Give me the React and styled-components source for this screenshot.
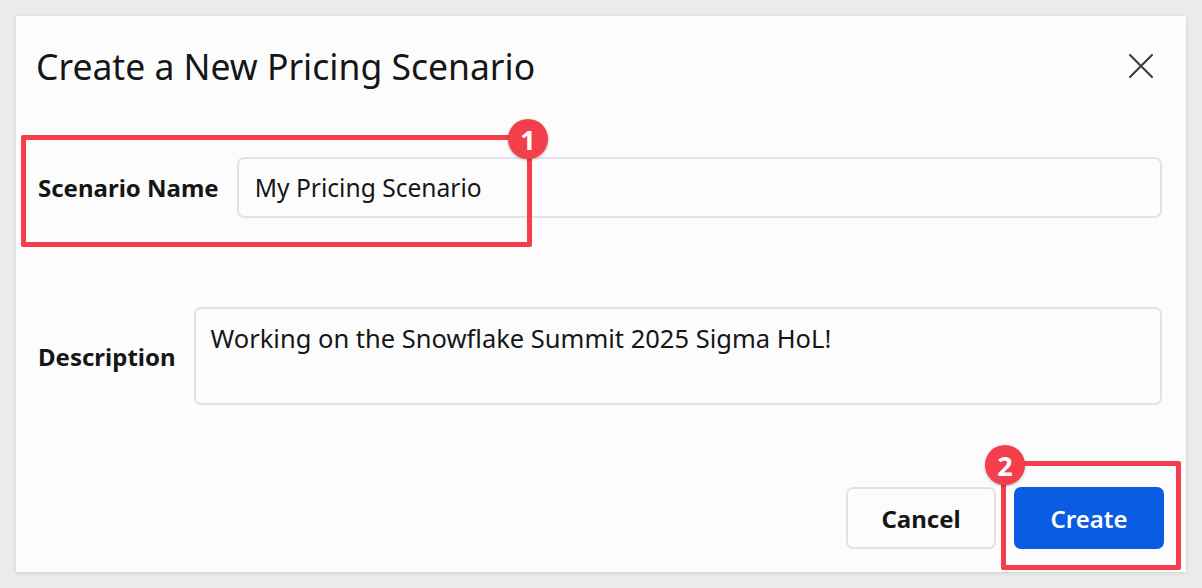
import styled, { createGlobalStyle } from "styled-components";

const GlobalStyle = createGlobalStyle`
  body {
    margin: 0;
    background: #ebebeb;
    font-family: "Noto Sans", "Open Sans", sans-serif;
    color: #161616;
  }
`;

const Page = styled.div`
  padding: 16px;
  width: 1202px;
  height: 588px;
  box-sizing: border-box;
`;

const Dialog = styled.div`
  position: relative;
  width: 1170px;
  height: 556px;
  background: #fcfcfc;
  box-shadow: 0 1px 4px rgba(0, 0, 0, 0.12);
  display: flex;
  flex-direction: column;
`;

const Header = styled.div`
  height: 100px;
  padding: 0 33px 0 20px;
  display: flex;
  align-items: center;
  justify-content: space-between;
`;

const Title = styled.h2`
  margin: 0;
  font-size: 35.5px;
  font-weight: 400;
  color: #161616;
`;

const CloseButton = styled.button`
  border: 0;
  background: none;
  padding: 0;
  width: 24px;
  height: 24px;
  display: flex;
  cursor: pointer;
`;

const Form = styled.div`
  padding: 41px 24px 0 22px;
  display: flex;
  flex-direction: column;
  gap: 89px;
`;

const Row = styled.div`
  display: flex;
  align-items: center;
  gap: ${(p) => p.$gap}px;
`;

const Label = styled.label`
  font-size: 24px;
  font-weight: 700;
  white-space: nowrap;
`;

const TextInput = styled.input`
  flex: 1;
  height: 61px;
  box-sizing: border-box;
  border: 2px solid #e3e3e3;
  border-radius: 7px;
  background: #fcfcfc;
  padding: 0 16px;
  font-family: "Noto Sans", sans-serif;
  font-size: 24.6px;
  color: #161616;
  outline: none;
`;

const TextArea = styled.textarea`
  flex: 1;
  height: 98px;
  box-sizing: border-box;
  border: 2px solid #e3e3e3;
  border-radius: 7px;
  background: #fcfcfc;
  padding: 12px 15px;
  font-family: "Noto Sans", sans-serif;
  font-size: 25.5px;
  line-height: 34px;
  color: #161616;
  resize: none;
  outline: none;
`;

const Footer = styled.div`
  margin-top: 82px;
  padding: 0 22px 0 0;
  display: flex;
  justify-content: flex-end;
  gap: 18px;
`;

const Button = styled.button`
  width: 150px;
  height: 62px;
  border-radius: 7px;
  font-family: "Noto Sans", sans-serif;
  font-size: 24px;
  font-weight: ${(p) => (p.$primary ? 600 : 700)};
  cursor: pointer;
  border: ${(p) => (p.$primary ? "0" : "2px solid #e3e3e3")};
  background: ${(p) => (p.$primary ? "#0a5ce3" : "#fcfcfc")};
  color: ${(p) => (p.$primary ? "#ffffff" : "#161616")};
`;

const Highlight = styled.div`
  position: absolute;
  left: ${(p) => p.$x}px;
  top: ${(p) => p.$y}px;
  width: ${(p) => p.$w}px;
  height: ${(p) => p.$h}px;
  box-sizing: border-box;
  border: 5px solid #f43e4c;
  border-radius: 2px;
  pointer-events: none;
`;

const Badge = styled.div`
  position: absolute;
  left: ${(p) => p.$x - 20}px;
  top: ${(p) => p.$y - 20}px;
  width: 40px;
  height: 40px;
  border-radius: 50%;
  background: #f43e4c;
  color: #fff;
  font-size: 27px;
  font-weight: 700;
  display: flex;
  align-items: center;
  justify-content: center;
  box-shadow: 0 1px 3px rgba(0, 0, 0, 0.3);
`;

const App = () => {
  return (
    <Page>
      <GlobalStyle />
      <Dialog>
        <Header>
          <Title>Create a New Pricing Scenario</Title>
          <CloseButton aria-label="Close">
            <svg width="24" height="24" viewBox="0 0 24 24">
              <path d="M1 1 L23 23 M23 1 L1 23" stroke="#3a3a3a" strokeWidth="2" strokeLinecap="round" />
            </svg>
          </CloseButton>
        </Header>
        <Form>
          <Row $gap={18}>
            <Label>Scenario Name</Label>
            <TextInput value="My Pricing Scenario" readOnly />
          </Row>
          <Row $gap={18}>
            <Label>Description</Label>
            <TextArea value="Working on the Snowflake Summit 2025 Sigma HoL!" readOnly />
          </Row>
        </Form>
        <Footer>
          <Button>Cancel</Button>
          <Button $primary>Create</Button>
        </Footer>

        <Highlight $x={5} $y={119} $w={511} $h={112} />
        <Badge $x={512} $y={123}>1</Badge>
        <Highlight $x={985} $y={445} $w={180} $h={109} />
        <Badge $x={989} $y={449}>2</Badge>
      </Dialog>
    </Page>
  );
};

export default App;
